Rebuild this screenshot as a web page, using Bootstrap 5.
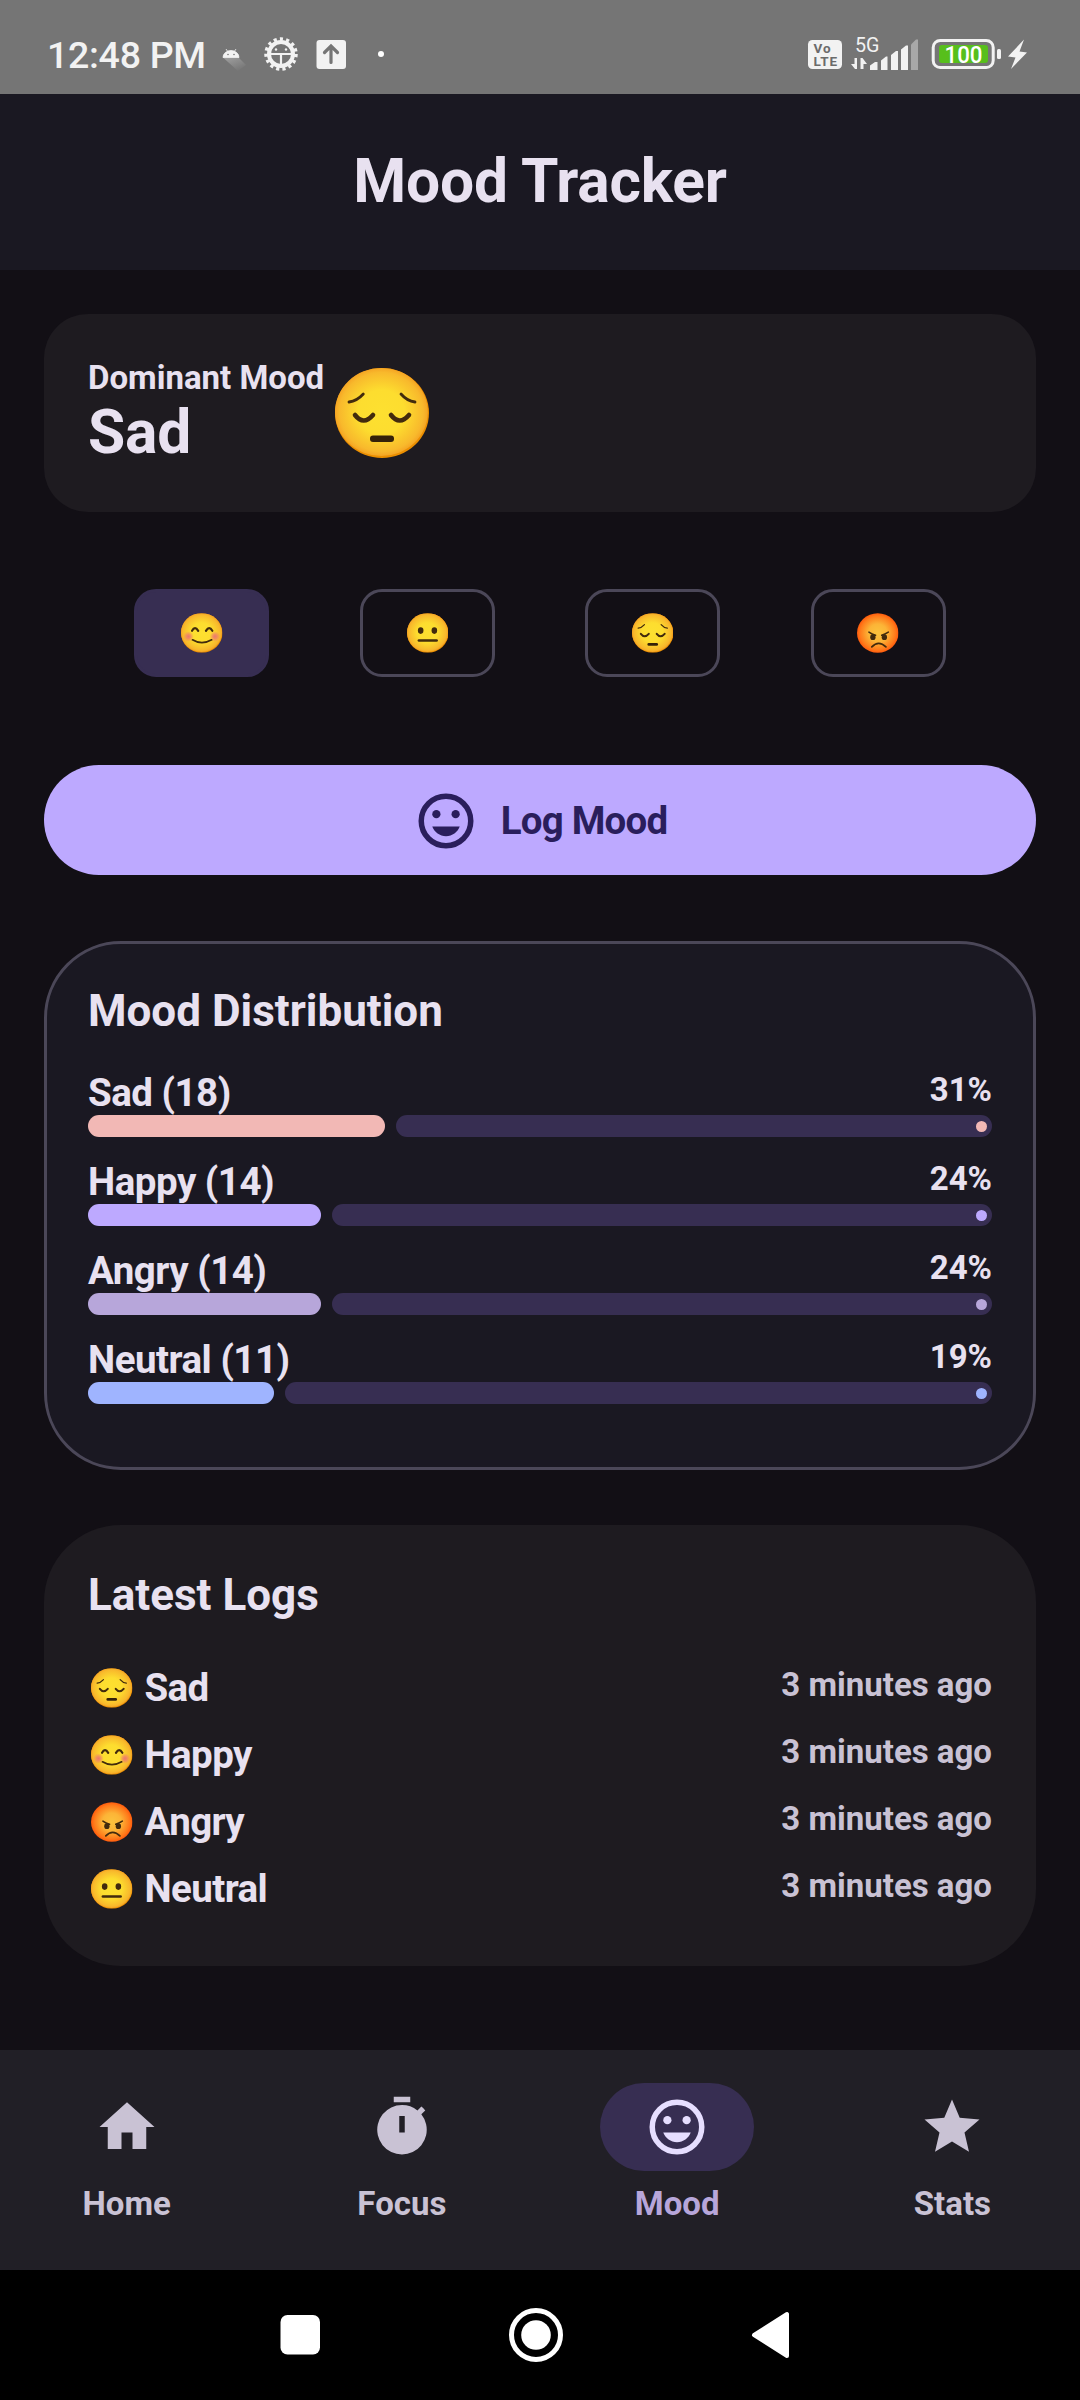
<!DOCTYPE html>
<html lang="en" data-bs-theme="dark">
<head>
<meta charset="utf-8">
<meta name="viewport" content="width=device-width, initial-scale=1">
<title>Mood Tracker</title>
<link href="https://cdn.jsdelivr.net/npm/bootstrap@5.3.0/dist/css/bootstrap.min.css" rel="stylesheet">
<style>
:root{--txt:#e8e1f0;--muted-txt:#c9c2d4;--track:#372e52;--line:#4b4758}
body{font-family:Roboto,"Noto Sans",sans-serif;font-weight:700;background:#120f15;color:var(--txt);width:1080px;height:2400px;overflow:hidden}
svg{display:block;flex:none}
.statusbar{height:94px;background:#757575;padding:0 52px 0 47px;color:#f2f2f2}
.clock{font-size:37.5px;line-height:44px;margin-top:15px;width:159px;white-space:nowrap;font-weight:500;letter-spacing:-.3px}
.appbar{height:176px;background:#1a1822;padding-bottom:2px}
.big-title{font-size:60.5px;font-weight:700;line-height:65px;color:var(--txt);letter-spacing:-.2px}
.content-area{height:1780px;padding:44px 44px 0}
.panel{background:#1e1b20;border-radius:77px;padding:37px 44px 0;border:0;color:var(--txt)}
.panel-hero{height:198px;border-radius:44px;padding-top:42px}
.small-label{font-size:33px;line-height:44px;letter-spacing:0}
.hero-text{width:247px;white-space:nowrap}
.face-lg{width:94px;height:90px;margin-top:12px}
.face-sm{width:41.5px;height:40px}
.mood-row{margin-top:77px;height:88px}
.mood-opt{width:135px;height:88px;border:3px solid var(--line);border-radius:22px;padding:0}
.mood-opt.selected{background:var(--track);border-color:var(--track)}
.log-btn{margin-top:88px;height:110px;background:#bda9ff;color:#2a1e5c;font-size:38.5px;line-height:44px;padding:1px 0 0;border:0;gap:22px;font-weight:700;letter-spacing:-.8px}
.panel-dist{margin-top:66px;height:529px;background:#1a1822;border:3px solid var(--line);padding:34px 41px 0}
.panel-title{font-size:44px;line-height:66px;font-weight:700;color:var(--txt);margin-bottom:21px}
.panel-logs .panel-title{margin-bottom:26px}
.dist-head{height:50px}
.dist-item{margin-bottom:17px}
.dist-name{font-size:38.5px;line-height:55px;letter-spacing:-.5px}
.dist-pct{font-size:33px;line-height:50px;letter-spacing:0}
.meter{height:22px;gap:11px}
.meter-fill,.meter-rest{border-radius:11px;height:22px}
.meter-fill{background:var(--c)}
.meter-rest{background:var(--track);padding-right:5.5px}
.meter-rest i{width:11px;height:11px;border-radius:50%;background:var(--c)}
.panel-logs{margin-top:55px;height:441px}
.log-item{height:67px;line-height:67px;font-size:38.5px;letter-spacing:-.6px}
.log-item .face-sm{margin:0 12px 0 3px}
.log-time{font-size:33px;line-height:61.5px;letter-spacing:0;color:var(--muted-txt)}
.tabbar{height:220px;background:#211f26;padding:33px 1px 0 0;gap:22px;color:var(--muted-txt)}
.tab-pill{width:154px;height:88px;border-radius:44px}
.tab-item.current{color:#b7a6da}
.tab-item.current .tab-pill{background:var(--track);color:#e6deff}
.tab-item .small-label{margin-top:11px}
.sysbar{height:130px;background:#000}
</style>
</head>
<body>
<svg width="0" height="0" class="position-absolute" aria-hidden="true">
  <defs>
    <radialGradient id="gy"><stop offset="0" stop-color="#fde030"/><stop offset=".5" stop-color="#fddd2f"/><stop offset=".9" stop-color="#f8b92c"/><stop offset="1" stop-color="#f5a524"/></radialGradient>
    <radialGradient id="gr"><stop offset="0" stop-color="#fcc33d"/><stop offset=".45" stop-color="#fcb437"/><stop offset=".85" stop-color="#ff7a1a"/><stop offset="1" stop-color="#ff5a0c"/></radialGradient>
    <radialGradient id="gc"><stop offset="0" stop-color="#ed7770"/><stop offset=".4" stop-color="#ed7770" stop-opacity=".7"/><stop offset="1" stop-color="#ed7770" stop-opacity="0"/></radialGradient>
    <symbol id="base" viewBox="0 0 94 90"><ellipse cx="47" cy="45" rx="47" ry="45" fill="#eb8f00"/><ellipse cx="46.4" cy="44" rx="46.4" ry="44" fill="url(#gy)"/></symbol>
    <symbol id="sad" viewBox="0 0 94 90"><use href="#base"/><g fill="none" stroke="#422b0d" stroke-linecap="round"><path stroke-width="2.8" d="M14 34Q22 33 28.300 26M66 26Q72 33 80 34"/><path stroke-width="4.600" d="M20 47Q28.500 58 38 47M56 47Q64.500 58 74 47"/></g><rect x="35" y="67.500" width="24" height="6.500" rx="3" fill="#352209"/></symbol>
    <symbol id="happy" viewBox="0 0 94 90"><use href="#base"/><circle cx="17" cy="53" r="12" fill="url(#gc)"/><circle cx="77" cy="53" r="12" fill="url(#gc)"/><g fill="none" stroke="#422b0d" stroke-linecap="round" stroke-width="5"><path d="M25 40Q31.500 28 39 40M56.500 40Q64 28 71 40"/><path stroke-width="4" d="M26 60.500Q47 73.500 69.500 60.500"/></g></symbol>
    <symbol id="neutral" viewBox="0 0 94 90"><use href="#base"/><g fill="#422b0d"><ellipse cx="31" cy="39.500" rx="6.300" ry="7.500"/><ellipse cx="62" cy="39.500" rx="6.300" ry="7.500"/><rect x="24" y="59" width="46" height="6" rx="3"/></g></symbol>
    <symbol id="angry" viewBox="0 0 94 90"><ellipse cx="47" cy="45" rx="47" ry="45" fill="url(#gr)"/><g fill="none" stroke="#422b0d" stroke-linecap="round" stroke-width="3.500"><path d="M27 43Q34 48 42 50M71 43Q63 48 56 50"/><path stroke-width="4" d="M33.500 76.500Q49 60 65.500 76.500"/></g><ellipse cx="36" cy="54.500" rx="6" ry="6.500" fill="#422b0d"/><ellipse cx="62" cy="54.500" rx="6" ry="6.500" fill="#422b0d"/></symbol>
    <symbol id="grin" viewBox="0 0 24 24"><circle cx="12" cy="12" r="9" fill="none" stroke="currentColor" stroke-width="2"/><circle cx="8.500" cy="9.500" r="1.500" fill="currentColor"/><circle cx="15.500" cy="9.500" r="1.500" fill="currentColor"/><path fill="currentColor" d="M7 14c.8 2.050 2.700 3.500 5 3.500s4.200-1.450 5-3.500z"/></symbol>
  </defs>
</svg>

<div class="statusbar d-flex align-items-center">
  <div class="clock">12:48 PM</div>
  <svg width="190" height="94" viewBox="206 0 190 94" class="me-auto">
    <defs><linearGradient id="sh" x1="0" y1="0" x2=".7" y2="1"><stop offset="0" stop-color="#a0a0a0"/><stop offset="1" stop-color="#757575"/></linearGradient></defs>
    <path d="M223.500 58 239 58 246 65 238 71z" fill="url(#sh)"/>
    <path d="M223 57.500a8 7 0 0 1 16 0zM226 49l2 3M236 49l-2 3" fill="#f2f2f2" stroke="#f2f2f2" stroke-width=".8"/>
    <circle cx="228" cy="54.500" r=".8" fill="#757575"/><circle cx="234" cy="54.500" r=".8" fill="#757575"/>
    <circle cx="281" cy="54" r="15" fill="none" stroke="#f2f2f2" stroke-width="3.500" stroke-dasharray="3.150 3.132"/>
    <circle cx="281" cy="54" r="12" fill="none" stroke="#f2f2f2" stroke-width="4"/>
    <path d="M271.500 51.500a10 8.500 0 0 1 19 0z" fill="#757575"/>
    <path d="M270 54h22M281 55v12" stroke="#f2f2f2" stroke-width="2.200"/>
    <circle cx="276" cy="49.500" r="1.200" fill="#f2f2f2"/><circle cx="286" cy="49.500" r="1.200" fill="#f2f2f2"/>
    <rect x="316.500" y="40" width="29.500" height="29" rx="3" fill="#f2f2f2"/>
    <path d="M331 62.500V47.500M324.500 52.500l6.500-6.500 6.500 6.500" fill="none" stroke="#757575" stroke-width="3.200" stroke-linecap="round"/>
    <circle cx="381" cy="54" r="3" fill="#fff"/>
  </svg>
  <svg width="224" height="94" viewBox="804 0 224 94" font-family="Roboto,sans-serif">
    <rect x="808" y="40" width="34" height="29" rx="4.500" fill="#f2f2f2"/>
    <g fill="#6b6b6b" font-weight="700"><text x="813.500" y="53" font-size="13.500" textLength="17">Vo</text><text x="813.500" y="65.800" font-size="13.500" textLength="23.500">LTE</text></g>
    <text x="855" y="52" font-size="20.500" font-weight="400" fill="#f2f2f2" textLength="24.500" lengthAdjust="spacingAndGlyphs">5G</text>
    <path d="M857 58v11h-2l-4-5h3.500v-6zM860.500 69V58h2l4.500 6h-3.500v5z" fill="#f2f2f2"/>
    <g fill="#f2f2f2"><path d="M870 70v-4.500l5-3.500h2.500v8zM881 70V60.500l5-4h1.500V70zM891 70V55l5-4h2V70zM901 70V49.500l5-4h2V70z"/><path fill="#a8a8a8" d="M911 70V44.500l5-5h2V70z"/></g>
    <rect x="933.200" y="40.500" width="60" height="27" rx="7" fill="none" stroke="#f2f2f2" stroke-width="3"/>
    <rect x="939" y="45" width="49" height="18" rx="3" fill="#57bf1c"/>
    <rect x="997" y="49" width="4" height="10" rx="1.500" fill="#f2f2f2"/>
    <text x="944.500" y="62.700" font-size="23" font-weight="500" fill="#fff" textLength="38" lengthAdjust="spacingAndGlyphs">100</text>
    <path d="M1024 39.500 1008 56.500 1015.500 57.500 1011 69 1027 52.500 1019.500 51.500z" fill="#f2f2f2"/>
  </svg>
</div>

<header class="appbar d-flex align-items-center justify-content-center"><h1 class="big-title m-0">Mood Tracker</h1></header>

<main class="content-area">
  <section class="card panel panel-hero flex-row align-items-start">
    <div class="hero-text"><div class="small-label">Dominant Mood</div><div class="big-title">Sad</div></div>
    <svg class="face-lg"><use href="#sad"/></svg>
  </section>

  <div class="mood-row d-flex justify-content-evenly">
    <button class="btn mood-opt selected d-flex align-items-center justify-content-center" aria-label="Happy"><svg class="face-sm"><use href="#happy"/></svg></button>
    <button class="btn mood-opt d-flex align-items-center justify-content-center" aria-label="Neutral"><svg class="face-sm"><use href="#neutral"/></svg></button>
    <button class="btn mood-opt d-flex align-items-center justify-content-center" aria-label="Sad"><svg class="face-sm"><use href="#sad"/></svg></button>
    <button class="btn mood-opt d-flex align-items-center justify-content-center" aria-label="Angry"><svg class="face-sm"><use href="#angry"/></svg></button>
  </div>

  <button class="btn log-btn w-100 rounded-pill d-flex align-items-center justify-content-center"><svg width="66" height="66"><use href="#grin"/></svg><span>Log Mood</span></button>

  <section class="card panel panel-dist">
    <h2 class="panel-title">Mood Distribution</h2>
    <div class="dist-item" style="--c:#f2b8b5"><div class="dist-head d-flex justify-content-between"><span class="dist-name">Sad (18)</span><span class="dist-pct">31%</span></div><div class="meter d-flex"><div class="meter-fill" style="width:296.500px"></div><div class="meter-rest flex-fill d-flex align-items-center justify-content-end"><i></i></div></div></div>
    <div class="dist-item" style="--c:#bda9ff"><div class="dist-head d-flex justify-content-between"><span class="dist-name">Happy (14)</span><span class="dist-pct">24%</span></div><div class="meter d-flex"><div class="meter-fill" style="width:233px"></div><div class="meter-rest flex-fill d-flex align-items-center justify-content-end"><i></i></div></div></div>
    <div class="dist-item" style="--c:#b7a6da"><div class="dist-head d-flex justify-content-between"><span class="dist-name">Angry (14)</span><span class="dist-pct">24%</span></div><div class="meter d-flex"><div class="meter-fill" style="width:233px"></div><div class="meter-rest flex-fill d-flex align-items-center justify-content-end"><i></i></div></div></div>
    <div class="dist-item" style="--c:#9fb4ff"><div class="dist-head d-flex justify-content-between"><span class="dist-name">Neutral (11)</span><span class="dist-pct">19%</span></div><div class="meter d-flex"><div class="meter-fill" style="width:185.500px"></div><div class="meter-rest flex-fill d-flex align-items-center justify-content-end"><i></i></div></div></div>
  </section>

  <section class="card panel panel-logs">
    <h2 class="panel-title">Latest Logs</h2>
    <div class="log-item d-flex align-items-center"><svg class="face-sm"><use href="#sad"/></svg><span>Sad</span><span class="log-time ms-auto align-self-start">3 minutes ago</span></div>
    <div class="log-item d-flex align-items-center"><svg class="face-sm"><use href="#happy"/></svg><span>Happy</span><span class="log-time ms-auto align-self-start">3 minutes ago</span></div>
    <div class="log-item d-flex align-items-center"><svg class="face-sm"><use href="#angry"/></svg><span>Angry</span><span class="log-time ms-auto align-self-start">3 minutes ago</span></div>
    <div class="log-item d-flex align-items-center"><svg class="face-sm"><use href="#neutral"/></svg><span>Neutral</span><span class="log-time ms-auto align-self-start">3 minutes ago</span></div>
  </section>
</main>

<nav class="tabbar d-flex">
  <div class="tab-item flex-fill w-25 d-flex flex-column align-items-center"><div class="tab-pill d-flex align-items-center justify-content-center"><svg width="66" height="66" viewBox="0 0 24 24" fill="currentColor"><path d="M10 20v-6h4v6h5v-8h3L12 3 2 12h3v8z"/></svg></div><span class="small-label">Home</span></div>
  <div class="tab-item flex-fill w-25 d-flex flex-column align-items-center"><div class="tab-pill d-flex align-items-center justify-content-center"><svg width="66" height="66" viewBox="0 0 24 24" fill="currentColor"><path d="M9 1h6v2H9zm10.030 6.390 1.420-1.420c-.43-.51-.9-.99-1.410-1.410l-1.420 1.420A8.960 8.960 0 0 0 12 4a9 9 0 1 0 7.030 3.390zM13 14h-2V8h2z"/></svg></div><span class="small-label">Focus</span></div>
  <div class="tab-item current flex-fill w-25 d-flex flex-column align-items-center"><div class="tab-pill d-flex align-items-center justify-content-center"><svg width="66" height="66"><use href="#grin"/></svg></div><span class="small-label">Mood</span></div>
  <div class="tab-item flex-fill w-25 d-flex flex-column align-items-center"><div class="tab-pill d-flex align-items-center justify-content-center"><svg width="66" height="66" viewBox="0 0 24 24" fill="currentColor"><path d="M12 17.270 18.180 21l-1.640-7.030L22 9.240l-7.190-.61L12 2 9.190 8.630 2 9.240l5.460 4.730L5.820 21z"/></svg></div><span class="small-label">Stats</span></div>
</nav>

<div class="sysbar d-flex justify-content-center">
  <svg width="1080" height="130" viewBox="0 0 1080 130" fill="#fff"><rect x="280.500" y="45" width="39.500" height="39.500" rx="7"/><circle cx="536" cy="65" r="24.500" fill="none" stroke="#fff" stroke-width="5"/><circle cx="536" cy="65" r="14.800"/><path d="M754 65 787 44V86z" stroke="#fff" stroke-width="4" stroke-linejoin="round"/></svg>
</div>
<script src="https://cdn.jsdelivr.net/npm/bootstrap@5.3.0/dist/js/bootstrap.bundle.min.js"></script>
</body>
</html>
